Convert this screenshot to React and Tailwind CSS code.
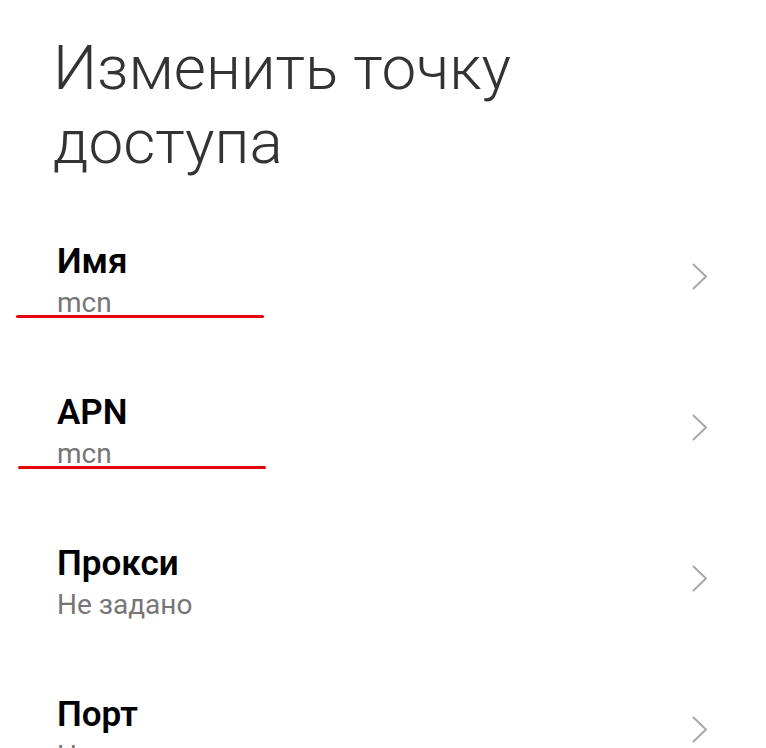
import React from "react";

function Chevron() {
  return (
    <svg width="16" height="27" viewBox="0 0 16 27" fill="none" className="shrink-0 mb-[8px]">
      <path d="M1.5 1.5 L14 13.5 L1.5 25.5" stroke="#a8a8a8" strokeWidth="2" strokeLinecap="round" strokeLinejoin="round" />
    </svg>
  );
}

function Row({ title, value }) {
  return (
    <div className="h-[151px] flex items-center justify-between pl-[57px] pr-[58px]">
      <div className="flex flex-col">
        <div className="text-[35px] leading-[40px] font-semibold text-black">{title}</div>
        <div className="text-[28px] leading-[34px] text-[#767676] mt-[4px]">{value}</div>
      </div>
      <Chevron />
    </div>
  );
}

export default function App() {
  return (
    <div className="relative w-[766px] h-[748px] overflow-hidden bg-white" style={{ fontFamily: "Roboto, 'Noto Sans', sans-serif" }}>
      <div className="pl-[53px] pt-[31px] pb-[26px] text-[62px] leading-[74px] font-light text-[#333]">
        Изменить точку<br />доступа
      </div>
      <Row title="Имя" value="mcn" />
      <Row title="APN" value="mcn" />
      <Row title="Прокси" value="Не задано" />
      <Row title="Порт" value="Не задано" />
      <div className="absolute left-[16px] top-[315px] w-[248px] h-[3px] bg-[#e8000b] rounded-full" />
      <div className="absolute left-[18px] top-[466px] w-[248px] h-[3px] bg-[#e8000b] rounded-full" />
    </div>
  );
}
